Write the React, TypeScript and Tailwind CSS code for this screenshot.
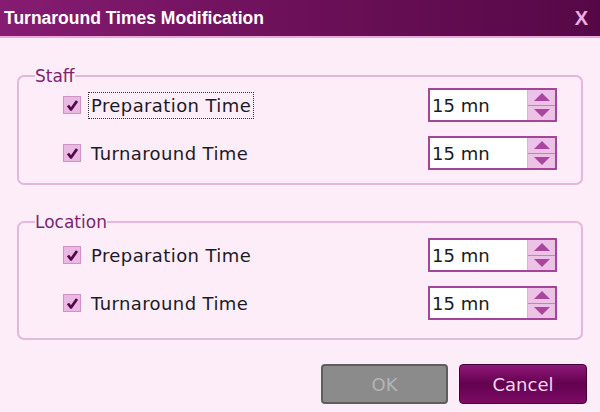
import { useState } from 'react';

type Row = { label: string; value: number; focused?: boolean };

const groups: { title: string; rows: Row[] }[] = [
  {
    title: 'Staff',
    rows: [
      { label: 'Preparation Time', value: 15, focused: true },
      { label: 'Turnaround Time', value: 15 },
    ],
  },
  {
    title: 'Location',
    rows: [
      { label: 'Preparation Time', value: 15 },
      { label: 'Turnaround Time', value: 15 },
    ],
  },
];

function CheckBox({ checked }: { checked: boolean }) {
  return (
    <span className="flex h-[18px] w-[18px] items-center justify-center border border-[#d091c6] bg-[#eab9e3]">
      {checked && (
        <svg width="13" height="13" viewBox="0 0 13 13">
          <path d="M2 6.5 L5 10.5 L11 2" fill="none" stroke="#54084a" strokeWidth="2.8" strokeLinejoin="round" />
        </svg>
      )}
    </span>
  );
}

function Spinner({ value }: { value: number }) {
  return (
    <div className="flex h-[34px] w-[129px] border-2 border-[#a3469a] bg-white">
      <div className="flex flex-1 items-center pl-[2px] text-[18px] text-[#1a1a1a]">{value} mn</div>
      <div className="flex w-[28px] flex-col border-l border-[#e2b0da] bg-[#ecc3e6]">
        <div className="flex flex-1 items-center justify-center border-b border-[#c67fbd]">
          <svg width="16" height="8" viewBox="0 0 16 8">
            <path d="M8 0 L16 8 L0 8 Z" fill="#a8479d" />
          </svg>
        </div>
        <div className="flex flex-1 items-center justify-center">
          <svg width="16" height="8" viewBox="0 0 16 8">
            <path d="M0 0 L16 0 L8 8 Z" fill="#a8479d" />
          </svg>
        </div>
      </div>
    </div>
  );
}

export default function App() {
  const [checks] = useState([true, true, true, true]);

  return (
    <div className="flex h-[412px] w-[600px] flex-col bg-[#fcedf8] font-['DejaVu_Sans',sans-serif]">
      {/* title bar */}
      <div className="flex h-[38px] items-center justify-between border-b-2 border-[#eaa9dc] bg-gradient-to-r from-[#861c72] via-[#6c1059] to-[#560846] pl-[4px] pr-[12px]">
        <span className="font-['Liberation_Sans',sans-serif] text-[17.5px] font-bold text-white">
          Turnaround Times Modification
        </span>
        <span className="font-['Liberation_Sans',sans-serif] text-[20px] font-bold text-[#ecaee2]">X</span>
      </div>

      <div className="flex flex-1 flex-col px-[17px] pt-[28px]">
        {groups.map((g, gi) => (
          <fieldset
            key={g.title}
            className={`rounded-[7px] border-2 border-[#e2b8dc] px-0 ${
              gi === 0 ? 'mb-[27px] pb-[13px] pt-[2px]' : 'pb-[18px] pt-[6px]'
            }`}
          >
            <legend className="ml-[16px] px-0 text-[17px] leading-[20px] text-[#7c2470]">{g.title}</legend>
            <div className="flex flex-col gap-[14px]">
              {g.rows.map((r, ri) => (
                <div key={ri} className="flex items-center justify-between pl-[44px] pr-[24px]">
                  <div className="flex items-center gap-[8px]">
                    <CheckBox checked={checks[gi * 2 + ri]} />
                    <span
                      className={`px-[2px] text-[18px] leading-[25px] tracking-[0.4px] text-[#1c1a26] ${
                        r.focused ? 'outline outline-1 outline-dotted outline-[#333]' : ''
                      }`}
                    >
                      {r.label}
                    </span>
                  </div>
                  <Spinner value={r.value} />
                </div>
              ))}
            </div>
          </fieldset>
        ))}

        <div className="mt-auto mb-[8px] flex justify-end gap-[11px]">
          <button className="h-[40px] w-[127px] rounded-[4px] border-2 border-[#5e5e5e] bg-[#8b8b8b] text-[18px] text-[#b4b4b4]">
            OK
          </button>
          <button className="mr-[-4px] h-[40px] w-[128px] rounded-[4px] border border-[#4a0039] bg-gradient-to-b from-[#8e1878] via-[#63024f] to-[#7c0c66] text-[18px] text-[#f6d6ef]">
            Cancel
          </button>
        </div>
      </div>
    </div>
  );
}
